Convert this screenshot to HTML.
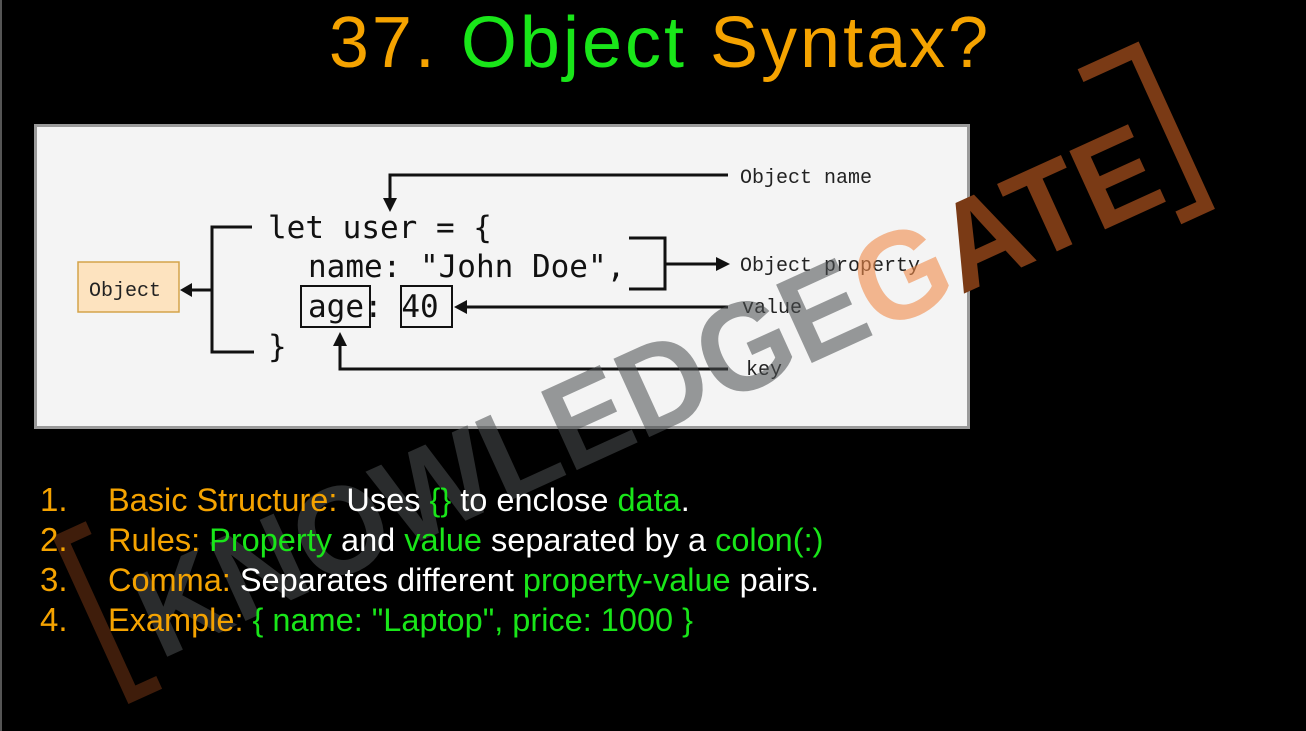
<!DOCTYPE html>
<html><head><meta charset="utf-8"><style>
html,body{margin:0;padding:0;background:#000;width:1306px;height:731px;overflow:hidden;position:relative;font-family:"Liberation Sans",sans-serif}
.title{position:absolute;top:2px;left:0;width:1306px;text-align:center;font-size:72px;letter-spacing:3px;color:#f5a300;font-family:"Comic Sans MS","Liberation Sans",sans-serif;padding-left:14px;box-sizing:border-box}
.g{color:#19e619}
.box{position:absolute;left:34px;top:124px;width:930px;height:299px;background:#f4f4f4;border:3px solid #9a9a9a}
.list{position:absolute;left:40px;top:480px;font-size:32.5px;line-height:39px;color:#fff}
.list .n{display:inline-block;width:68px;color:#f5a300;font-size:33px}
.o{color:#f5a300}
</style></head><body>
<div style="position:absolute;left:0;top:0;width:2px;height:731px;background:#555"></div>
<div class="title">37. <span class="g">Object</span> Syntax?</div>
<div class="box"></div>
<svg width="1306" height="731" style="position:absolute;left:0;top:0">
<g font-family="DejaVu Sans Mono,monospace" fill="#111">
<text x="268" y="238" font-size="31">let user = {</text>
<text x="308" y="277" font-size="31">name: "John Doe",</text>
<text x="308" y="317" font-size="31">age: 40</text>
<text x="268" y="357" font-size="31">}</text>
</g>
<rect x="301" y="286" width="69" height="41" fill="none" stroke="#111" stroke-width="2"/>
<rect x="401" y="286" width="51" height="41" fill="none" stroke="#111" stroke-width="2"/>
<rect x="78" y="262" width="101" height="50" fill="#fde3bf" stroke="#d4a34a" stroke-width="1.5"/>
<text x="89" y="296" font-family="Liberation Mono,monospace" font-size="20" fill="#222">Object</text>
<g stroke="#111" stroke-width="3" fill="none">
<polyline points="252,227 212,227 212,352 254,352"/>
<line x1="212" y1="290" x2="186" y2="290"/>
<polyline points="728,175 390,175 390,205"/>
<polyline points="629,238 665,238 665,289 629,289"/>
<line x1="665" y1="264" x2="720" y2="264"/>
<line x1="728" y1="307" x2="462" y2="307"/>
<polyline points="728,369 340,369 340,340"/>
</g>
<g fill="#111">
<polygon points="180,290 192,283 192,297"/>
<polygon points="390,212 383,198 397,198"/>
<polygon points="730,264 716,257 716,271"/>
<polygon points="454,307 467,300 467,314"/>
<polygon points="340,332 333,346 347,346"/>
</g>
<g font-family="Liberation Mono,monospace" font-size="20" fill="#222">
<text x="740" y="183">Object name</text>
<text x="740" y="271">Object property</text>
<text x="742" y="313">value</text>
<text x="746" y="375">key</text>
</g>
<g transform="translate(160,660) rotate(-24.5)">
<text x="0" y="0" font-family="Liberation Sans,sans-serif" font-weight="bold" font-size="125" textLength="1110" lengthAdjust="spacingAndGlyphs" fill="#4b4e50" fill-opacity="0.56">KNOWLEDGE<tspan fill="#f08a4a" fill-opacity="0.6">G</tspan><tspan fill="#7a3a15" fill-opacity="1">ATE</tspan></text>
<polyline points="-10,-150 -40,-150 -40,20 -10,20" fill="none" stroke="#5a2a10" stroke-width="14" stroke-opacity="0.7"/>
<polyline points="1080,-150 1140,-150 1140,20 1110,20" fill="none" stroke="#7a3a15" stroke-width="14"/>
</g>
</svg>
<div class="list">
<div><span class="n">1.</span><span class="o">Basic Structure:</span> Uses <span class="g">{}</span> to enclose <span class="g">data</span>.</div>
<div><span class="n">2.</span><span class="o">Rules:</span> <span class="g">Property</span> and <span class="g">value</span> separated by a <span class="g">colon(:)</span></div>
<div><span class="n">3.</span><span class="o">Comma:</span> Separates different <span class="g">property-value</span> pairs.</div>
<div><span class="n">4.</span><span class="o">Example:</span> <span class="g">{ name: "Laptop", price: 1000 }</span></div>
</div>
</body></html>
